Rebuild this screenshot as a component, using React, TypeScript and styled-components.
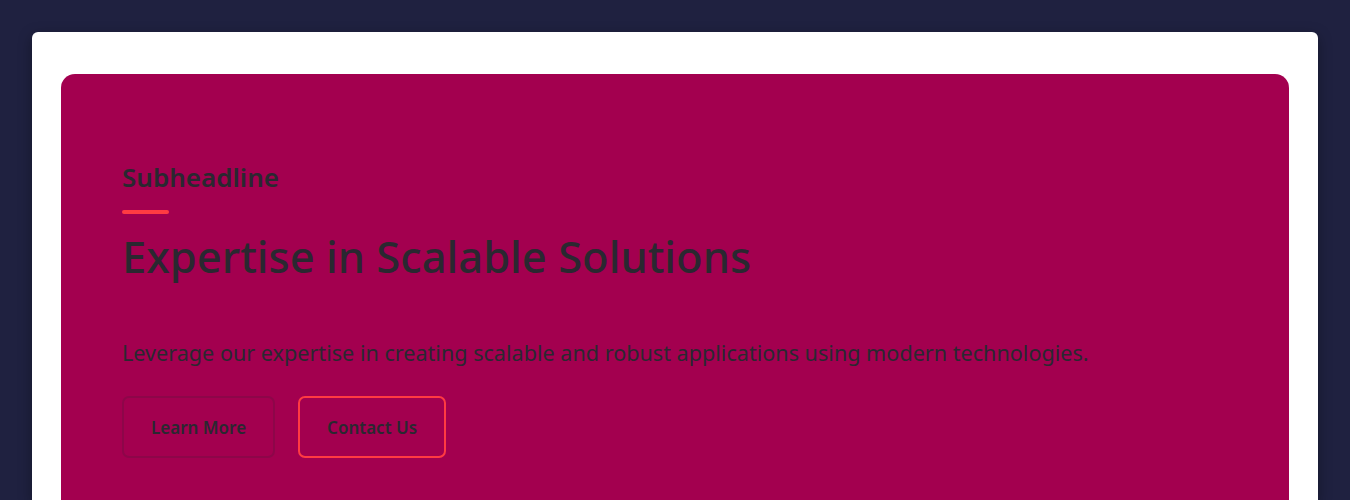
import React from "react";
import styled, { createGlobalStyle } from "styled-components";

const Global = createGlobalStyle`
  html, body { margin: 0; padding: 0; }
  body {
    background: #1f2140;
    font-family: "Noto Sans", "Open Sans", sans-serif;
  }
`;

const Page = styled.div`
  padding: 32px 32px 0;
  height: 500px;
  box-sizing: border-box;
  overflow: hidden;
`;

const Card = styled.div`
  background: #ffffff;
  border-radius: 6px 6px 0 0;
  box-shadow: 0 4px 14px rgba(0, 0, 0, 0.35);
  padding: 42px 29px 0;
  height: 100%;
  box-sizing: border-box;
  overflow: hidden;
`;

const Hero = styled.section`
  background: #a3004f;
  border-radius: 14px 14px 0 0;
  padding: 87px 61px 0;
  height: 100%;
  box-sizing: border-box;
  display: flex;
  flex-direction: column;
  align-items: flex-start;
  color: #2a2830;
`;

const Sub = styled.h3`
  margin: 0;
  font-size: 26px;
  font-weight: 600;
  line-height: 32px;
`;

const Accent = styled.div`
  width: 47px;
  height: 4px;
  border-radius: 2px;
  background: #ff3b42;
  margin-top: 17px;
`;

const Title = styled.h1`
  margin: 15px 0 0;
  font-size: 43.5px;
  font-weight: 500;
  line-height: 54px;
`;

const Lead = styled.p`
  margin: 55px 0 0;
  font-size: 21.6px;
  line-height: 30px;
  font-weight: 400;
`;

const Actions = styled.div`
  display: flex;
  gap: 23px;
  margin-top: 28px;
`;

const Button = styled.button<{ $accent?: boolean }>`
  font-family: inherit;
  background: transparent;
  color: #2a2830;
  font-size: 17px;
  font-weight: 600;
  height: 62px;
  padding: 0 27px;
  border-radius: 7px;
  border: 2px solid ${(p) => (p.$accent ? "#ff3b42" : "rgba(43, 34, 51, 0.18)")};
  cursor: pointer;
`;

export default function App() {
  return (
    <>
      <Global />
      <Page>
        <Card>
          <Hero>
            <Sub>Subheadline</Sub>
            <Accent />
            <Title>Expertise in Scalable Solutions</Title>
            <Lead>
              Leverage our expertise in creating scalable and robust applications using modern technologies.
            </Lead>
            <Actions>
              <Button>Learn More</Button>
              <Button $accent>Contact Us</Button>
            </Actions>
          </Hero>
        </Card>
      </Page>
    </>
  );
}
